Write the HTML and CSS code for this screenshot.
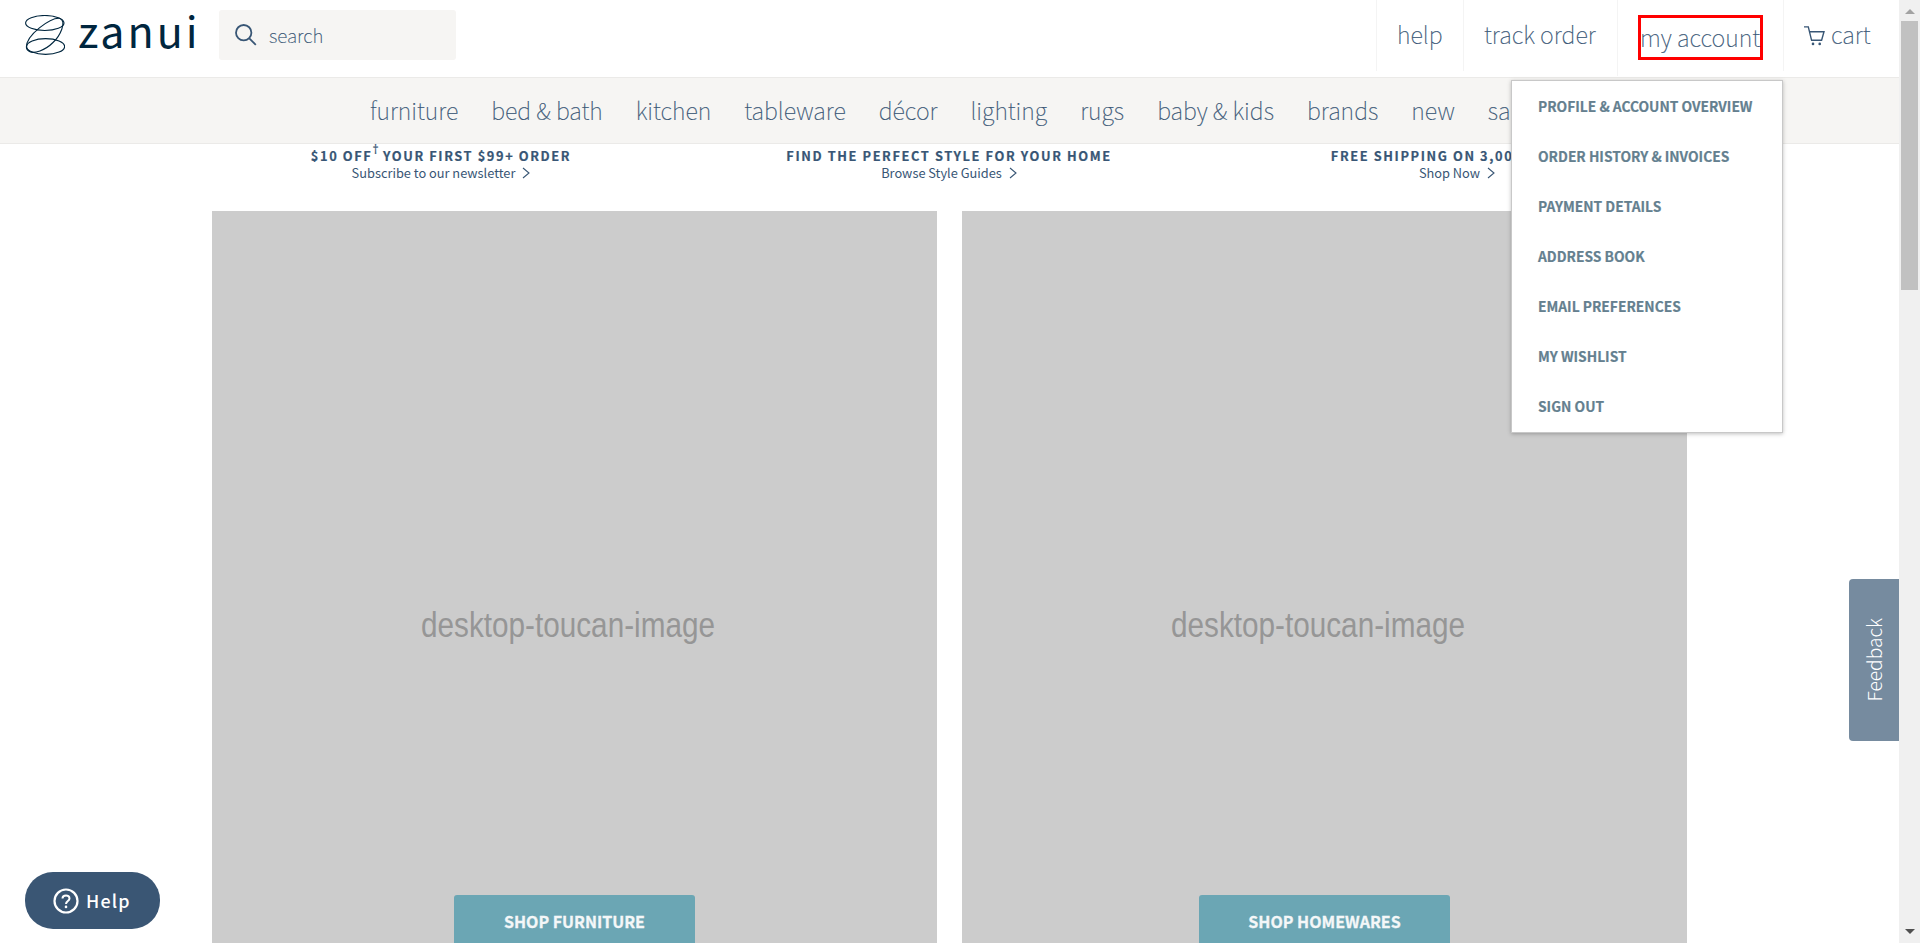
FILE: index.html
```html
<!DOCTYPE html>
<html lang="en">
<head>
<meta charset="utf-8">
<title>Zanui</title>
<link rel="stylesheet" href="styles.css">
</head>
<body>
<div class="page">
  <header class="header">
    <a class="logo">
      <svg class="logo-mark" viewBox="0 0 40 40" fill="none" stroke="currentColor" stroke-width="1.1">
        <ellipse cx="19.8" cy="8" rx="19.2" ry="7.5"/>
        <ellipse cx="20.6" cy="31.5" rx="19" ry="7.9"/>
        <path d="M1.4 32C1.4 20 25 2.6 34.500 3.200C42.500 6 35 21 28 27.500C20 35.500 9 39 4.500 36.600C2.500 35.500 1.400 34 1.400 32Z"/>
      </svg>
      <span class="logo-name">zanui</span>
    </a>
    <div class="search">
      <svg class="search-icon" viewBox="0 0 22 22" fill="none" stroke="currentColor" stroke-width="1.8"><circle cx="8.700" cy="8.700" r="7.700"/><path d="M14.300 14.300L20.800 20.800"/></svg>
      <span class="search-text">search</span>
    </div>
    <nav class="tools">
      <a class="tool tool-help">help</a>
      <a class="tool tool-track">track order</a>
      <div class="tool tool-account">
        <a class="account-label">my account</a>
        <ul class="menu">
          <li>Profile &amp; Account Overview</li>
          <li>Order History &amp; Invoices</li>
          <li>Payment Details</li>
          <li>Address Book</li>
          <li>Email Preferences</li>
          <li>My Wishlist</li>
          <li>Sign Out</li>
        </ul>
      </div>
      <a class="tool tool-cart">
        <svg class="cart-icon" viewBox="0 0 21 20" fill="none" stroke="currentColor" stroke-width="1.4"><path d="M0 .9H4.300L7.600 14.300H17.600L20 5.700H5.600"/><circle cx="9" cy="17.900" r="1.300" fill="currentColor" stroke="none"/><circle cx="15.700" cy="17.900" r="1.300" fill="currentColor" stroke="none"/></svg>
        cart
      </a>
    </nav>
  </header>
  <nav class="categories">
    <a>furniture</a><a>bed &amp; bath</a><a>kitchen</a><a>tableware</a><a>décor</a><a>lighting</a><a>rugs</a><a>baby &amp; kids</a><a>brands</a><a>new</a><a>sale</a>
  </nav>
  <section class="promos">
    <div class="promo">
      <strong>$10 OFF<sup>†</sup> YOUR FIRST $99+ ORDER</strong>
      <span>Subscribe to our newsletter <svg class="chevron" viewBox="0 0 8 12"><path d="M1 1L7 6L1 11"/></svg></span>
    </div>
    <div class="promo">
      <strong>FIND THE PERFECT STYLE FOR YOUR HOME</strong>
      <span>Browse Style Guides <svg class="chevron" viewBox="0 0 8 12"><path d="M1 1L7 6L1 11"/></svg></span>
    </div>
    <div class="promo">
      <strong>FREE SHIPPING ON 3,000+ ITEMS</strong>
      <span>Shop Now <svg class="chevron" viewBox="0 0 8 12"><path d="M1 1L7 6L1 11"/></svg></span>
    </div>
  </section>
  <main class="tiles">
    <div class="tile">
      <svg class="placeholder" viewBox="0 0 294 44"><text x="0" y="29" textLength="294" lengthAdjust="spacingAndGlyphs">desktop-toucan-image</text></svg>
      <a class="button button-furniture">SHOP FURNITURE</a>
    </div>
    <div class="tile">
      <svg class="placeholder" viewBox="0 0 294 44"><text x="0" y="29" textLength="294" lengthAdjust="spacingAndGlyphs">desktop-toucan-image</text></svg>
      <a class="button button-homewares">SHOP HOMEWARES</a>
    </div>
  </main>
  <a class="feedback"><span>Feedback</span></a>
  <a class="help">
    <svg class="help-icon" viewBox="0 0 26 26" fill="none" stroke="currentColor"><circle cx="13" cy="13" r="11.500" stroke-width="2.200"/><path d="M9.500 10.600C9.500 6.400 16.500 6.400 16.500 10.400C16.500 13 13 13 13 16" stroke-width="2"/><circle cx="13" cy="18.900" r="1.300" fill="currentColor" stroke="none"/></svg>
    <span>Help</span>
  </a>
</div>
<div class="scrollbar">
  <i class="arrow arrow-up"></i>
  <i class="thumb"></i>
  <i class="arrow arrow-down"></i>
</div>
</body>
</html>
```
FILE: styles.css
```css
* { box-sizing: border-box; }
body {
  margin: 0;
  display: flex;
  height: 943px;
  overflow: hidden;
  background: #fff;
  color: #385675;
  font-family: "Noto Sans CJK SC", "Open Sans", sans-serif;
}
svg { display: block; flex: none; }
.page {
  position: relative;
  width: 1899px;
  height: 943px;
  overflow: hidden;
}

/* Header */
.header {
  display: flex;
  height: 78px;
  border-bottom: 1px solid #ebeae8;
}
.logo {
  display: flex;
  width: 219px;
  padding: 15px 0 0 25px;
  color: #00263e;
}
.logo-mark { width: 40px; height: 40px; }
.logo-name {
  margin: -7px 0 0 13px;
  font-size: 43px;
  line-height: 42px;
  letter-spacing: 3px;
}
.search {
  display: flex;
  align-items: center;
  width: 237px;
  height: 50px;
  margin-top: 10px;
  padding-left: 16px;
  border-radius: 3px;
  background: #f6f5f3;
}
.search-icon { width: 22px; height: 22px; }
.search-text {
  margin-left: 12px;
  font-size: 18.9px;
  font-weight: 100;
  line-height: 50px;
  -webkit-text-stroke: .2px;
}
.tools {
  display: flex;
  margin-left: auto;
}
.tool {
  height: 71px;
  padding-left: 20px;
  border-left: 1px solid #f4f4f4;
  font-size: 23.4px;
  font-weight: 100;
  line-height: 69px;
  white-space: nowrap;
  -webkit-text-stroke: .2px;
}
.tool-help { width: 87px; }
.tool-track { width: 154px; }
.tool-account {
  position: relative;
  width: 166px;
  height: 76px;
  padding: 15px 0 0 20px;
}
.account-label {
  display: block;
  width: 125px;
  height: 45px;
  border: 3px solid #f00;
  line-height: 39px;
  text-indent: -1px;
}
.tool-cart {
  display: flex;
  width: 116px;
}
.cart-icon {
  width: 21px;
  height: 20px;
  margin: 26px 6px 0 0;
}
.menu {
  position: absolute;
  z-index: 5;
  top: 80px;
  right: 0;
  width: 272px;
  height: 353px;
  margin: 0;
  padding: 0 0 0 26px;
  border: 1px solid #c8c8c8;
  background: #fff;
  box-shadow: 0 1px 4px rgba(0, 0, 0, .25);
  color: #64808f;
  font-size: 13.8px;
  font-weight: 700;
  list-style: none;
  text-transform: uppercase;
}
.menu li {
  height: 50px;
  line-height: 50px;
}

/* Category bar */
.categories {
  display: flex;
  gap: 33px;
  height: 66px;
  padding-left: 370px;
  border-bottom: 1px solid #ebeae8;
  background: #f6f5f3;
  font-size: 23.3px;
  font-weight: 100;
  line-height: 64px;
  white-space: nowrap;
  -webkit-text-stroke: .2px;
}

/* Promo strip */
.promos {
  display: grid;
  grid-template-columns: repeat(3, 508px);
  height: 67px;
  padding: 3px 0 0 187px;
}
.promo {
  display: flex;
  flex-direction: column;
  align-items: center;
  font-size: 12.8px;
  line-height: 17px;
}
.promo strong {
  font-size: 12.8px;
  letter-spacing: 1.6px;
  -webkit-text-stroke: .2px;
}
.promo sup {
  position: relative;
  top: -2px;
  font-family: "Open Sans", sans-serif;
  font-size: 12px;
  font-weight: 400;
  letter-spacing: 0;
  line-height: 0;
}
.promo span { display: flex; }
.chevron {
  width: 8px;
  height: 12px;
  margin: 3px 0 0 7px;
  fill: none;
  stroke: currentColor;
  stroke-width: 1.1;
}

/* Tiles */
.tiles {
  display: grid;
  grid-template-columns: 725px 725px;
  gap: 25px;
  padding-left: 212px;
}
.tile {
  display: flex;
  flex-direction: column;
  align-items: center;
  height: 780px;
  padding-top: 397px;
  background: #ccc;
}
.placeholder {
  width: 294px;
  height: 44px;
  margin-right: 13px;
  fill: #969696;
  font: 35px "Liberation Sans", Arial, sans-serif;
}
.button {
  height: 52px;
  margin-top: 243px;
  border-radius: 3px;
  background: #6ba6b4;
  color: #f4f7f8;
  font-size: 16px;
  font-weight: 700;
  line-height: 52px;
  text-align: center;
  -webkit-text-stroke: .3px;
}
.button-furniture { width: 241px; }
.button-homewares { width: 251px; }

/* Floating controls */
.feedback {
  position: absolute;
  top: 579px;
  right: 0;
  display: flex;
  align-items: center;
  justify-content: center;
  width: 50px;
  height: 162px;
  border-radius: 4px 0 0 4px;
  background: #768b9f;
  color: #fff;
  font-size: 19.2px;
  font-weight: 300;
  line-height: 46px;
}
.feedback span {
  writing-mode: vertical-rl;
  transform: rotate(180deg);
}
.help {
  position: absolute;
  left: 25px;
  bottom: 14px;
  display: flex;
  align-items: center;
  width: 135px;
  height: 57px;
  padding-left: 28px;
  border-radius: 28px;
  background: #3a5674;
  color: #fff;
  font-size: 17.9px;
  font-weight: 500;
  letter-spacing: 1.2px;
  line-height: 57px;
}
.help-icon {
  width: 26px;
  height: 26px;
  margin-right: 7px;
}

/* Scrollbar */
.scrollbar {
  display: flex;
  flex-direction: column;
  align-items: center;
  width: 21px;
  height: 943px;
  padding: 9px 0;
  background: #f0f0f0;
}
.arrow {
  border: 5px solid transparent;
}
.arrow-up {
  border-top: 0;
  border-bottom-color: #a3a3a3;
}
.arrow-down {
  margin-top: auto;
  border-bottom: 0;
  border-top-color: #505050;
}
.thumb {
  width: 17px;
  height: 269px;
  margin-top: 7px;
  background: #c1c1c1;
}
```
